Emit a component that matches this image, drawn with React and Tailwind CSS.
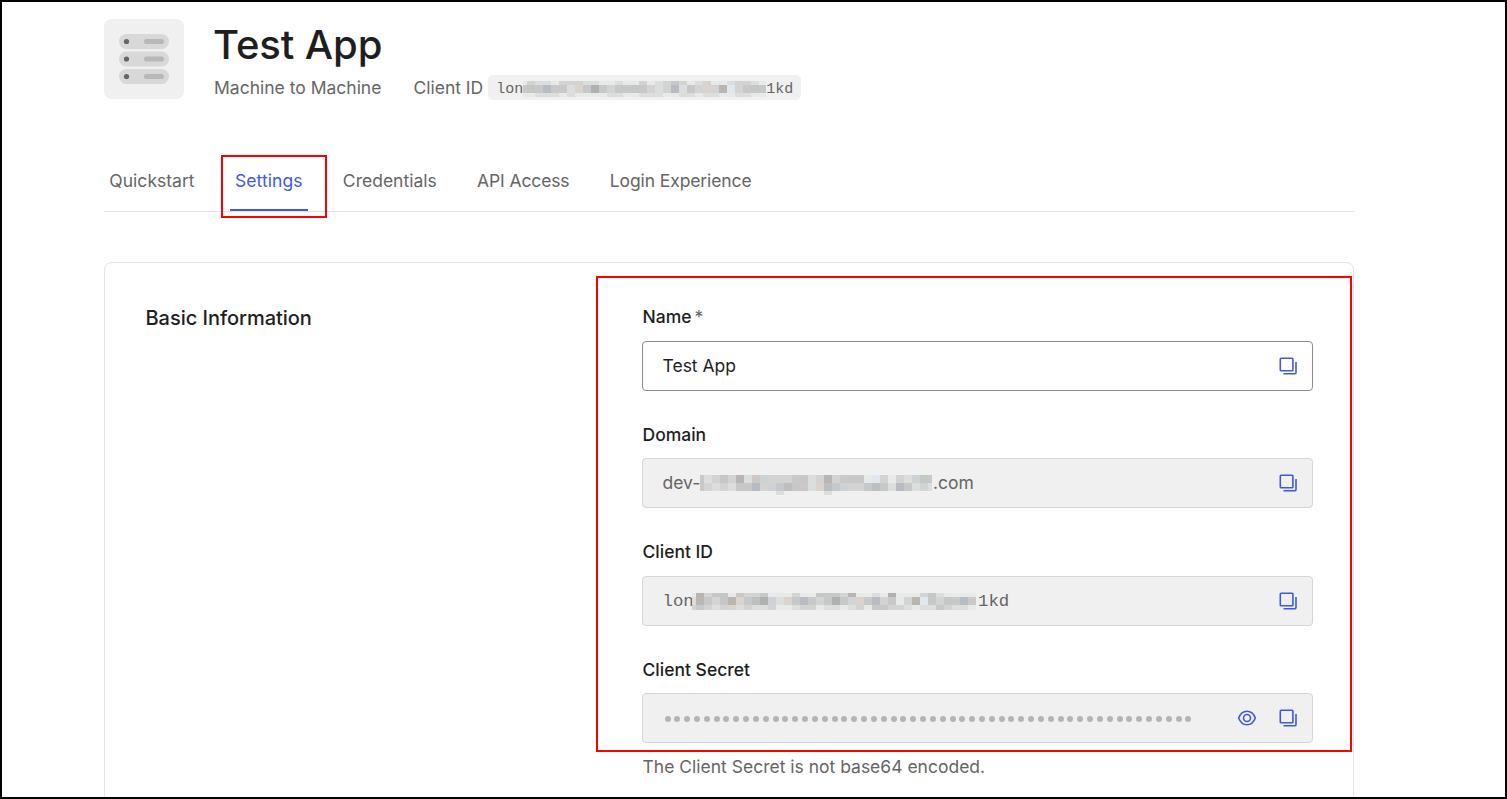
import React from "react";

// One character per cell, mapped to the greys of the redaction blocks
const SHADES = {
  a: "#b0b0b0",
  b: "#bcbec0",
  c: "#c7c8c9",
  d: "#d3d3d4",
  e: "#dcdddd",
  f: "#e8e9e9",
  w: "#dad3ce",
  v: "#bab5b1",
  s: "#ccd2d5",
  l: "#e1e7ee",
  p: "#cdc8c8",
  g: "#c5c7c4",
  k: "#b7bbc3",
};

const Redacted = ({ rows, heights, className }) => (
  <span className={`flex flex-col shrink-0 overflow-hidden ${className}`}>
    {rows.map((row, y) => (
      <span key={y} className="flex" style={{ height: heights[y] }}>
        {row.split("").map((cell, x) => (
          <span
            key={x}
            className="h-full shrink-0"
            style={{ width: x === 0 ? 4 : 8, background: SHADES[cell] }}
          />
        ))}
      </span>
    ))}
  </span>
);

const CopyIcon = () => (
  <svg width="20" height="20" viewBox="0 0 20 20" fill="none" stroke="#3f59e4" strokeWidth="1.6" strokeLinejoin="round">
    <rect x="2.3" y="2.2" width="12.6" height="12.6" rx="0.8" />
    <path d="M18 6V16.4a1.4 1.4 0 0 1-1.4 1.4H5.5" />
  </svg>
);

const EyeIcon = () => (
  <svg width="20" height="20" viewBox="0 0 20 20" fill="none" stroke="#3f59e4" strokeWidth="1.6">
    <path d="M1.7 10C3.3 5.6 6.5 3.2 10 3.2s6.7 2.4 8.3 6.8c-1.6 4.4-4.8 6.8-8.3 6.8S3.3 14.4 1.7 10Z" strokeLinejoin="round" />
    <circle cx="10" cy="10" r="3.5" />
  </svg>
);

const AppIcon = () => (
  <svg width="80" height="80" viewBox="0 0 80 80" className="shrink-0">
    <rect width="80" height="80" rx="7.5" fill="#f0f0f0" />
    {[15, 32.5, 50].map((y) => (
      <g key={y}>
        <rect x="15" y={y} width="50" height="15" rx="7.5" fill="#d8d8d8" />
        <circle cx="22.5" cy={y + 7.5} r="2.6" fill="#656565" />
        <rect x="40" y={y + 5} width="20" height="5" rx="2.5" fill="#b8b8b8" />
      </g>
    ))}
  </svg>
);

const Field = ({ label, required, editable, secret, children }) => (
  <div className="h-[117.5px]">
    <div className="flex h-[25px] items-center pl-[0.5px] pt-[2px] text-[17.5px] font-medium text-[#1e1e1e]">
      {label}
      {required && <span className="ml-[3px] font-normal text-[#656565]">*</span>}
    </div>
    <div
      className={`mt-3 flex h-[50px] items-center rounded-[4px] border pl-[19.5px] pr-[14px] text-[17.5px] ${
        editable ? "border-[#8b8b8b] bg-white text-[#1e1e1e]" : "border-[#d6d6d6] bg-[#f0f0f0] text-[#656565]"
      }`}
    >
      <div className="flex h-full flex-1 items-center whitespace-nowrap">{children}</div>
      <div className="flex items-center gap-[21px]">
        {secret && <EyeIcon />}
        <CopyIcon />
      </div>
    </div>
  </div>
);

const tabs = [
  { label: "Quickstart", style: "tracking-[0.03px]" },
  { label: "Settings", style: "tracking-[0.08px]" },
  { label: "Credentials", style: "tracking-[0.01px]" },
  { label: "API Access", style: "tracking-[-0.12px]" },
  { label: "Login Experience", style: "tracking-[-0.1px]" },
];

export default function App() {
  return (
    <div className="relative h-[799px] w-[1507px] overflow-hidden border-2 border-black bg-white pl-[102px] pt-[17px] font-['Inter',sans-serif] text-[#656565]">
      <header className="flex h-20 w-[1250px]">
        <AppIcon />
        <div className="ml-[30px]">
          <h1 className="-ml-px h-[50px] pt-px text-[40px] font-medium leading-[50px] tracking-[-0.1px] text-[#1e1e1e]">Test App</h1>
          <div className="mt-[6px] flex h-[25px] items-center text-[17.5px]">
            <span className="pt-[2px]">Machine to Machine</span>
            <span className="ml-8 pt-[2px]">Client ID</span>
            <code className="ml-[5px] flex h-[25px] w-[313px] items-center rounded-[5px] bg-[#f0f0f0] pl-[8px] font-['Liberation_Mono',monospace] text-[15px]">
              <span className="w-[27px] pt-[5px]">lon</span>
              <Redacted
                className="mt-[2px] w-[243px]"
                heights={[4, 8, 4]}
                rows={["fdeefdddeeffeffdfedcdfedffeddefe", "pgckcpewcacdccgcdedkecdwdvldcgccpg", "ffeeefeffffeeffeeeffeefeeffeeffe"]}
              />
              <span className="pt-[5px]">1kd</span>
            </code>
          </div>
        </div>
      </header>

      <nav className="mt-[46px] flex h-[67px] w-[1250px] gap-[29.7px] border-b border-[#e4e4e6] text-[17.5px]">
        {tabs.map((tab) => (
          <div
            key={tab.label}
            className={`flex items-center border-b-2 px-[5.3px] pt-[9px] ${tab.style} ${
              tab.label === "Settings" ? "border-[#3f59e4] text-[#3f59e4]" : "border-transparent"
            }`}
          >
            {tab.label}
          </div>
        ))}
      </nav>

      <section className="mt-[50px] flex h-[700px] w-[1250px] rounded-[8px] border border-[#e4e4e6] pl-10 pt-[40.9px]">
        <h2 className="w-[497px] shrink-0 pl-[0.5px] pt-px text-[20px] font-medium leading-[27px] tracking-[-0.03px] text-[#1e1e1e]">Basic Information</h2>
        <div className="w-[671px]">
          <Field label="Name" required editable>Test App</Field>
          <Field label="Domain">
            <span className="w-[37.5px]">dev-</span>
            <Redacted
              className="mt-[4px] w-[232px]"
              heights={[8, 8, 4]}
              rows={["cedgdvepsdddpcedvdpccfldfdesgca", "pdedecckdscbcpewbcsddcbcekcedev", "          e     e"]}
            />
            <span className="ml-px">.com</span>
          </Field>
          <Field label="Client ID">
            <span className="w-[29.5px] pt-[2px] font-['Liberation_Mono',monospace] text-[17.4px]">lon</span>
            <Redacted
              className="mt-[2px] w-[284px]"
              heights={[4, 8, 5]}
              rows={["fvdggfpddcfffdffgccdvffefafffdgeffff", "evcdgvwcbasewckcdcacdwckdcfdvlcdgckp", "dcdedwedeedffeddfeefedfccddefeecdeef"]}
            />
            <span className="ml-[2px] pt-[2px] font-['Liberation_Mono',monospace] text-[17.4px]">1kd</span>
          </Field>
          <Field label="Client Secret" secret>
            <span className="ml-[2px] mt-px flex gap-[3.84px]">
              {Array.from({ length: 54 }, (_, i) => (
                <span key={i} className="h-[6px] w-[6px] rounded-full bg-[#b4b4b4]" />
              ))}
            </span>
          </Field>
          <p className="-mt-[20px] pl-[0.5px] text-[17.5px] leading-[25px]">The Client Secret is not base64 encoded.</p>
        </div>
      </section>

      {/* Callout boxes */}
      <div className="absolute left-[219px] top-[153px] h-[63px] w-[106px] border-2 border-[#ff0000]" />
      <div className="absolute left-[594px] top-[274px] h-[476px] w-[756px] border-2 border-[#ff0000]" />
    </div>
  );
}
